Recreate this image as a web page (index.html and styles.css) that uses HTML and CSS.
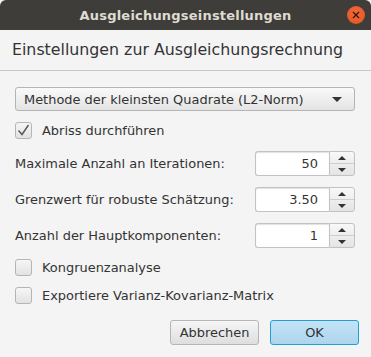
FILE: index.html
```html
<!DOCTYPE html>
<html>
<head>
<meta charset="utf-8">
<link rel="stylesheet" href="styles.css">
</head>
<body>
<div class="window">
  <div class="titlebar">
    <span class="title">Ausgleichungseinstellungen</span>
    <span class="close"><svg width="8" height="8" viewBox="0 0 8 8"><path d="M1 1L7 7M7 1L1 7" stroke="#3a1608" stroke-width="1.4" fill="none"/></svg></span>
  </div>
  <div class="header">Einstellungen zur Ausgleichungsrechnung</div>
  <div class="content">
    <div class="combo">
      <span>Methode der kleinsten Quadrate (L2-Norm)</span>
      <span class="arrow-down big"></span>
    </div>
    <label class="check first"><span class="box"><svg width="13" height="12" viewBox="0 0 13 12"><path d="M1.5 6.5L5 10.5L11.5 1" stroke="#555" stroke-width="1.4" fill="none"/></svg></span>Abriss durchführen</label>
    <div class="row r1">
      <span class="lbl">Maximale Anzahl an Iterationen:</span>
      <div class="spinner"><div class="field">50</div><div class="btns"><div class="b"><span class="arrow-up"></span></div><div class="b"><span class="arrow-down"></span></div></div></div>
    </div>
    <div class="row">
      <span class="lbl">Grenzwert für robuste Schätzung:</span>
      <div class="spinner"><div class="field">3.50</div><div class="btns"><div class="b"><span class="arrow-up"></span></div><div class="b"><span class="arrow-down"></span></div></div></div>
    </div>
    <div class="row">
      <span class="lbl">Anzahl der Hauptkomponenten:</span>
      <div class="spinner"><div class="field">1</div><div class="btns"><div class="b"><span class="arrow-up"></span></div><div class="b"><span class="arrow-down"></span></div></div></div>
    </div>
    <label class="check c2"><span class="box"></span>Kongruenzanalyse</label>
    <label class="check c3"><span class="box"></span>Exportiere Varianz-Kovarianz-Matrix</label>
    <div class="buttons">
      <div class="btn">Abbrechen</div>
      <div class="btn ok">OK</div>
    </div>
  </div>
</div>
</body>
</html>
```

FILE: styles.css
```css
* { box-sizing: border-box; }
html, body { margin: 0; padding: 0; background: #f4f4f4; }
body { width: 371px; height: 357px; overflow: hidden; font-family: "DejaVu Sans", sans-serif; color: #333; }
.window { width: 371px; height: 357px; background: #f4f4f4; }
.titlebar {
  height: 30px; background: #3e3d39; border-radius: 6px 6px 0 0;
  display: flex; align-items: center; justify-content: center; position: relative;
}
.title { color: #dfdbd2; font-weight: bold; font-size: 13px; letter-spacing: 0.2px; }
.close {
  position: absolute; right: 6px; top: 6px; width: 18px; height: 18px; border-radius: 50%;
  background: radial-gradient(circle at 50% 40%, #f26d3d, #e0501c); display: flex; align-items: center; justify-content: center;
}
.header {
  height: 41px; padding: 8px 0 0 12px; font-size: 15.8px; color: #333;
  border-bottom: 1px solid #c8c8c8; background: #f4f4f4; line-height: 24px;
}
.content { padding: 16px 16px 0 15px; font-size: 12.95px; }
.combo {
  height: 24px; border: 1px solid #b5b5b5; border-radius: 3px;
  background: linear-gradient(#f9f9f9, #e4e4e4);
  display: flex; align-items: center; justify-content: space-between; padding: 0 12px 0 8px;
  color: #333;
}
.arrow-down { width: 0; height: 0; border-left: 4px solid transparent; border-right: 4px solid transparent; border-top: 4px solid #333; display: inline-block; }
.arrow-down.big { border-left-width: 5px; border-right-width: 5px; border-top-width: 5px; }
.arrow-up { width: 0; height: 0; border-left: 4px solid transparent; border-right: 4px solid transparent; border-bottom: 4px solid #333; display: inline-block; }
.check { display: flex; align-items: center; height: 18px; color: #333; }
.check.first { margin-top: 10px; }
.check.c2 { margin-top: 10px; }
.check.c3 { margin-top: 10px; }
.box {
  width: 17px; height: 17px; border: 1px solid #b5b5b5; border-radius: 3px;
  background: linear-gradient(#f6f6f6, #e2e2e2); margin-right: 10px;
  display: flex; align-items: center; justify-content: center;
}
.row { display: flex; align-items: center; justify-content: space-between; height: 25px; margin-top: 11px; }
.row.r1 { margin-top: 12px; }
.lbl { color: #333; }
.spinner { display: flex; height: 25px; }
.field {
  width: 74px; height: 25px; border: 1px solid #c2c2c2; border-right: none; border-radius: 3px 0 0 3px;
  background: #fff; box-shadow: inset 0 1px 1px #e2e2e2; text-align: right; padding-right: 11px; line-height: 23px; color: #333;
}
.btns { width: 26px; height: 25px; border: 1px solid #c2c2c2; border-radius: 0 3px 3px 0; display: flex; flex-direction: column; background: linear-gradient(#f8f8f8, #e4e4e4); }
.btns .b { flex: 1; display: flex; align-items: center; justify-content: center; }
.btns .b + .b { border-top: 1px solid #cdcdcd; }
.buttons { display: flex; justify-content: flex-end; gap: 11px; margin-top: 16px; margin-right: -4px; }
.btn {
  width: 89px; height: 25px; border: 1px solid #b5b5b5; border-radius: 3px;
  background: linear-gradient(#f6f6f6, #dedede); display: flex; align-items: center; justify-content: center; color: #333;
}
.btn.ok { border-color: #1ea0d6; background: linear-gradient(#c4e3f5, #acd5ee); }
```
